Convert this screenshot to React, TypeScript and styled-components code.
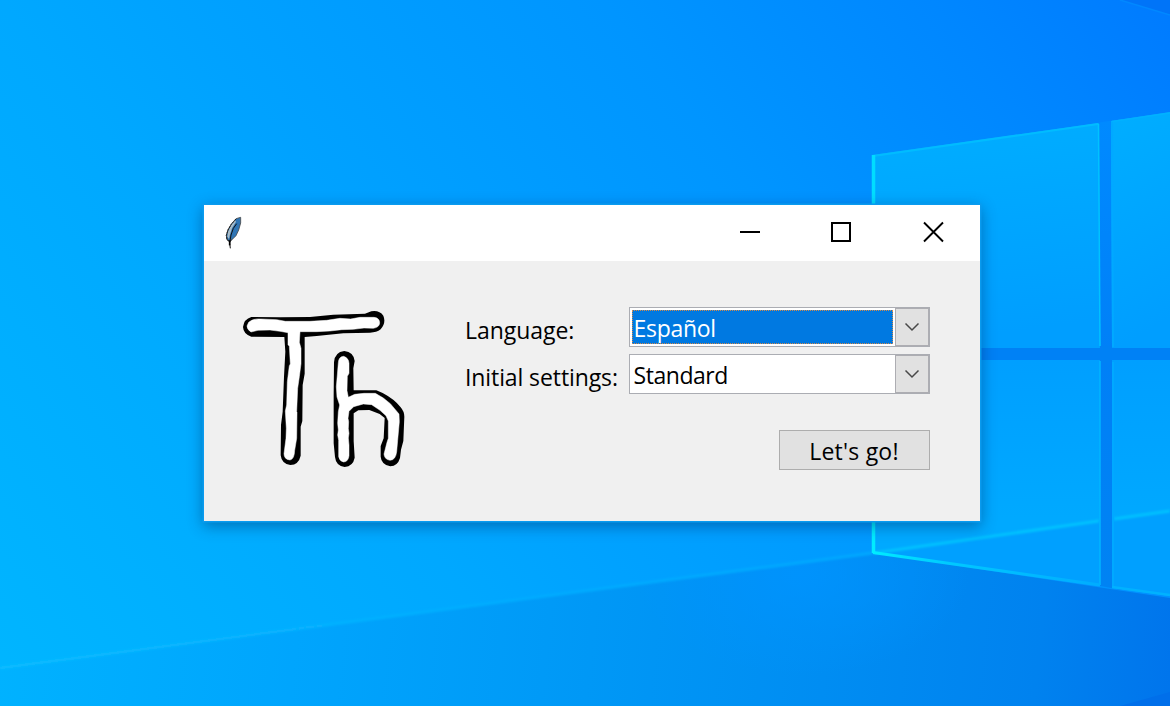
import React from 'react';
import styled, { createGlobalStyle } from 'styled-components';

const GlobalStyle = createGlobalStyle`
  body { margin: 0; overflow: hidden; }
  * { box-sizing: border-box; }
`;

const Desktop = styled.main`
  position: relative;
  width: 1170px;
  height: 706px;
  padding: 205px 0 0 204px;
  overflow: hidden;
  background: #009bff;
  font-family: 'Open Sans', 'Noto Sans', sans-serif;
  font-size: 23px;
  color: #000;
`;

const WallpaperSvg = styled.svg`
  position: absolute;
  inset: 0;
`;

const Window = styled.section`
  position: relative;
  width: 776px;
  height: 316px;
  background: #f0f0f0;
  box-shadow: 0 0 0 1.5px #0a9bef, 0 4px 14px 1px rgba(0, 40, 90, 0.45);
`;

const TitleBar = styled.header`
  display: flex;
  align-items: center;
  justify-content: space-between;
  height: 56px;
  padding-left: 12px;
  background: #fff;
`;

const Controls = styled.div`
  display: flex;
  height: 100%;
`;

const ControlButton = styled.button`
  display: grid;
  place-items: center;
  width: 92px;
  height: 54px;
  padding: 0;
  border: 0;
  background: transparent;
`;

const Body = styled.div`
  display: flex;
  padding: 34px 50px 0 26px;
`;

const Form = styled.form`
  display: flex;
  flex-direction: column;
  width: 465px;
  margin-left: 45px;
  padding-top: 12px;
`;

const Field = styled.div`
  display: flex;
  height: 40px;
  margin-bottom: 7px;
`;

const Label = styled.label<{ $spacing: number }>`
  width: 164px;
  padding-top: 3px;
  line-height: 40px;
  white-space: nowrap;
  letter-spacing: ${(p) => p.$spacing}px;
`;

const Combo = styled.div`
  display: flex;
  width: 301px;
  height: 40px;
  border: 1px solid #abadb3;
  background: #fff;
`;

const Value = styled.div<{ $selected?: boolean; $spacing: number }>`
  flex: 1;
  margin: 2px 2px 2px 2px;
  padding-left: 1.5px;
  line-height: 37px;
  letter-spacing: ${(p) => p.$spacing}px;
  color: ${(p) => (p.$selected ? '#fff' : '#000')};
  background: ${(p) => (p.$selected ? '#0079e1' : '#fff')};
  outline: ${(p) => (p.$selected ? '1px dotted #d48a4a' : '0')};
  outline-offset: -1px;
`;

const DropButton = styled.div`
  display: grid;
  place-items: center;
  width: 34px;
  height: 38px;
  border: 1px solid #adadb2;
  background: #e1e1e1;
`;

const GoButton = styled.button`
  align-self: flex-end;
  width: 151px;
  height: 40px;
  margin-top: 29px;
  padding: 3px 0 0;
  border: 1px solid #adadad;
  background: #e1e1e1;
  font: inherit;
  line-height: 35px;
  letter-spacing: 0.22px;
  text-indent: -1px;
  color: #000;
`;

const Wallpaper = () => (
  <WallpaperSvg width="1170" height="706" viewBox="0 0 1170 706">
    <defs>
      <linearGradient id="sky" gradientUnits="userSpaceOnUse" x1="0" y1="706" x2="1069" y2="-130">
        <stop offset="0" stopColor="#00b6ff" />
        <stop offset="0.32" stopColor="#00a8ff" />
        <stop offset="0.42" stopColor="#00a2ff" />
        <stop offset="0.67" stopColor="#0095ff" />
        <stop offset="0.86" stopColor="#0087ff" />
        <stop offset="1" stopColor="#007bff" />
      </linearGradient>
      <linearGradient id="floor" gradientUnits="userSpaceOnUse" x1="0" y1="640" x2="1170" y2="760">
        <stop offset="0" stopColor="#00b2ff" />
        <stop offset="0.25" stopColor="#00a5fd" />
        <stop offset="0.5" stopColor="#0098f6" />
        <stop offset="0.7" stopColor="#008df2" />
        <stop offset="0.88" stopColor="#0082ef" />
        <stop offset="1" stopColor="#0074ec" />
      </linearGradient>
      <radialGradient id="floorGlow" gradientUnits="userSpaceOnUse" cx="800" cy="575" r="170" gradientTransform="translate(0 230) scale(1 0.6)">
        <stop offset="0" stopColor="#0094ff" stopOpacity="0.8" />
        <stop offset="1" stopColor="#0094ff" stopOpacity="0" />
      </radialGradient>
      <linearGradient id="beam" gradientUnits="userSpaceOnUse" x1="0" y1="0" x2="873" y2="0">
        <stop offset="0" stopColor="#08bcff" />
        <stop offset="0.6" stopColor="#06acff" />
        <stop offset="1" stopColor="#00a8ff" />
      </linearGradient>
      <linearGradient id="edge" gradientUnits="userSpaceOnUse" x1="0" y1="155" x2="0" y2="553">
        <stop offset="0" stopColor="#00dcff" />
        <stop offset="1" stopColor="#00ecff" />
      </linearGradient>
      <linearGradient id="lowerEdge" gradientUnits="userSpaceOnUse" x1="873" y1="0" x2="1100" y2="0">
        <stop offset="0" stopColor="#00ecff" />
        <stop offset="0.35" stopColor="#00c8ff" />
        <stop offset="1" stopColor="#00acff" />
      </linearGradient>
      <linearGradient id="pane" x1="0" y1="0" x2="0.15" y2="1">
        <stop offset="0" stopColor="#00aeff" />
        <stop offset="1" stopColor="#009eff" />
      </linearGradient>
      <linearGradient id="paneLow" x1="0" y1="0" x2="0" y2="1">
        <stop offset="0" stopColor="#009fff" />
        <stop offset="0.7" stopColor="#00a9ff" />
      </linearGradient>
      <linearGradient id="bars" x1="0" y1="0" x2="0" y2="1">
        <stop offset="0" stopColor="#008aff" />
        <stop offset="0.5" stopColor="#0080f7" />
        <stop offset="1" stopColor="#0083f3" />
      </linearGradient>
      <filter id="soft" x="-10%" y="-20%" width="120%" height="140%"><feGaussianBlur stdDeviation="1.3" /></filter>
    </defs>
    <rect width="1170" height="706" fill="url(#sky)" />
    <path d="M1120 0L1170 15V0Z" fill="#0074f8" />
    <path d="M1120 0L1170 15" stroke="#0088ff" strokeWidth="1.5" />
    <path d="M0 668L873 553L1170 598V706H0Z" fill="url(#floor)" />
    <path d="M0 668L873 553L1170 598V706H0Z" fill="url(#floorGlow)" />
    <path d="M1170 692L1120 706H1170Z" fill="#006fea" />
    <path d="M0 668L873 553" stroke="url(#beam)" strokeWidth="3" filter="url(#soft)" />
    <path d="M1090 124L1122 119V590L1090 584Z" fill="url(#bars)" />
    <path d="M874 346H1170V363H874Z" fill="#0081f5" />
    <path d="M872 155L1099 123L1100 348H872Z" fill="url(#pane)" />
    <path d="M1111 121L1170 112V348H1112Z" fill="url(#pane)" />
    <path d="M872 360H1100V586L873 553Z" fill="url(#paneLow)" />
    <path d="M1112 360H1170V596L1112 588Z" fill="url(#paneLow)" />
    <path d="M874 553L1100 521V586Z" fill="#00a0ff" />
    <path d="M1112 519L1170 510V596L1112 588Z" fill="#00a0ff" />
    <g fill="none">
      <path d="M874 553L1099 521M1114 519L1170 511" stroke="#00c2ff" strokeWidth="3" filter="url(#soft)" />
      <path d="M873 156L1098 124" stroke="#00bcff" strokeWidth="2" />
      <path d="M1112 121.5L1170 113" stroke="#00b2ff" strokeWidth="1.5" />
      <path d="M1098.500 124L1100 346" stroke="#00c2ff" strokeWidth="1.500" />
      <path d="M1100 361V585" stroke="#00b6ff" strokeWidth="1.500" />
      <path d="M1112 122L1113 347M1113 362V588" stroke="#00a9ff" strokeWidth="2" />
      <path d="M873 552.500L1100 585" stroke="url(#lowerEdge)" strokeWidth="3" />
      <path d="M1112 587L1170 595" stroke="#00b2ff" strokeWidth="2.500" />
      <path d="M873.500 155V553" stroke="url(#edge)" strokeWidth="3.500" />
    </g>
  </WallpaperSvg>
);

const Feather = () => (
  <svg width="34" height="40" viewBox="60 48 102 120" aria-hidden="true">
    <path d="M134 61L120 65L106 81L96 98L91 115L93 128L101 134L109 127L120 116L128 99L134 78Z" fill="#2f75b5" stroke="#4a4a4a" strokeWidth="2.500" />
    <path d="M117 69L104 87L96 105L94 119L99 126L102 112L108 94L120 74Z" fill="#a9bcc8" />
    <path d="M120 66L106 82L96 99L91 115L93 128L101 134L109 127" fill="none" stroke="#1c1c1c" strokeWidth="3" strokeDasharray="7 2" />
    <path d="M122 80L112 94L105 114L101 138L103 154" fill="none" stroke="#111" strokeWidth="3" />
    <path d="M101 130V145" stroke="#000" strokeWidth="5" />
  </svg>
);

const Logo = () => (
  <svg width="190" height="190" viewBox="0 0 570 570" role="img">
    <path d="M64 66L150 67L240 66L310 59L405 56L424 49Q448 45 460 62Q469 84 452 103Q440 113 420 113L340 115L260 123L224 126L224 236L218 270L217 378L212 395L212 482Q206 509 181 510Q155 507 152 481L153 390L158 350L162 245L166 170L163 126L64 125Q40 117 39 96Q42 72 64 66Z" />
    <path d="M56 82Q70 70 92 72L140 74L166 79H240L290 76L330 70L362 72L390 67H432Q449 69 449 84Q448 97 430 100L402 99L370 103L335 104L300 108L260 110L210 110L208 142L213 160V206L208 245L203 280L200 350L201 352L200 430L194 466Q193 493 180 495Q162 493 162 476L168 430L169 400L166 348L170 330L172 260L178 212L181 207L178 154L174 149V113L150 109L120 105L84 106L63 111Q51 104 51 93Z" fill="#fff" stroke="#fff" strokeWidth="1.500" strokeLinejoin="round" />
    <path d="M312 202Q314 171 343 168Q371 171 374 198L370 220L371 286H439L458 294Q494 313 512 337Q523 350 523 365L520 438L513 464L510 489Q503 513 481 514Q454 509 452 485L452 453L461 430L464 369L449 357L418 345L385 346L371 355V438L374 488Q369 514 344 516Q318 513 315 486L311 445V300Z" />
    <path d="M325 203Q326 185 341 184Q356 189 357 205V235L352 244L351 287L355 307L374 298L402 295H436L460 309L481 326L507 357L508 380L503 436L500 470Q497 495 480 496Q463 493 462 477L471 442L475 430V378L468 362L450 346L425 329L400 327L371 335L357 349L354 370L356 380L355 401L357 415L355 429L357 450V482Q355 500 341 501Q328 498 326 485L326 436L323 420L325 405L323 385L325 350L329 330L321 306L319 275L322 240Z" fill="#fff" stroke="#fff" strokeWidth="1.500" strokeLinejoin="round" />
  </svg>
);

const Chevron = () => (
  <svg width="16" height="10" viewBox="0 0 16 10">
    <path d="M1.500 1.500L8 8L14.500 1.500" fill="none" stroke="#484848" strokeWidth="1.500" />
  </svg>
);

const fields = [
  { label: 'Language:', value: 'Español', selected: true, labelSpacing: -0.05, valueSpacing: -0.3 },
  { label: 'Initial settings:', value: 'Standard', selected: false, labelSpacing: -0.1, valueSpacing: -0.45 },
];

export default function App() {
  return (
    <>
      <GlobalStyle />
      <Desktop>
        <Wallpaper />
        <Window>
          <TitleBar>
            <Feather />
            <Controls>
              <ControlButton aria-label="Minimize">
                <svg width="22" height="22"><path d="M1 11H21" stroke="#000" strokeWidth="2" /></svg>
              </ControlButton>
              <ControlButton aria-label="Maximize">
                <svg width="22" height="22"><rect x="1" y="2" width="18" height="18" fill="none" stroke="#000" strokeWidth="2" /></svg>
              </ControlButton>
              <ControlButton aria-label="Close">
                <svg width="22" height="22"><path d="M1 1.500L20 20.500M20 1.500L1 20.500" stroke="#000" strokeWidth="1.900" /></svg>
              </ControlButton>
            </Controls>
          </TitleBar>
          <Body>
            <Logo />
            <Form>
              {fields.map((f) => (
                <Field key={f.label}>
                  <Label $spacing={f.labelSpacing}>{f.label}</Label>
                  <Combo>
                    <Value $selected={f.selected} $spacing={f.valueSpacing}>{f.value}</Value>
                    <DropButton><Chevron /></DropButton>
                  </Combo>
                </Field>
              ))}
              <GoButton type="button">Let's go!</GoButton>
            </Form>
          </Body>
        </Window>
      </Desktop>
    </>
  );
}
